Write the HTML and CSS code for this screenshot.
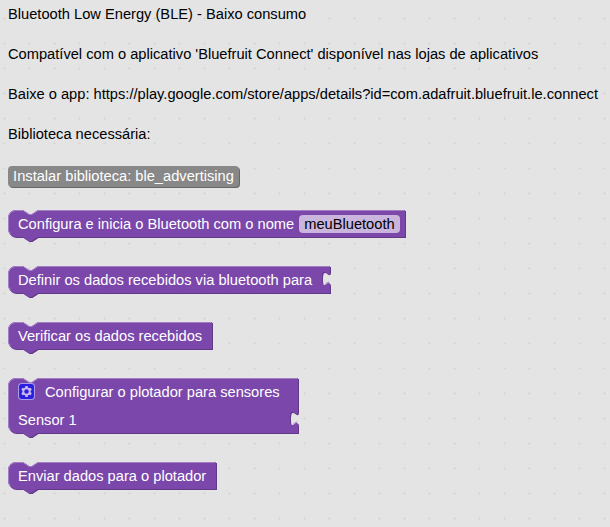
FILE: index.html
```html
<!DOCTYPE html>
<html lang="pt-BR">
<head>
<meta charset="utf-8">
<title>Bluetooth Low Energy</title>
<link rel="stylesheet" href="styles.css">
</head>
<body>
<svg class="grid" aria-hidden="true">
  <defs><pattern id="dots" width="25" height="25" patternUnits="userSpaceOnUse"><path d="M3 18.5h3M4.500 17v3" stroke="#d8d8d8"/></pattern></defs>
  <rect width="100%" height="100%" fill="url(#dots)"/>
</svg>
<main class="flyout">
  <p class="label">Bluetooth Low Energy (BLE) - Baixo consumo</p>
  <p class="label">Compatível com o aplicativo 'Bluefruit Connect' disponível nas lojas de aplicativos</p>
  <p class="label">Baixe o app: https://play.google.com/store/apps/details?id=com.adafruit.bluefruit.le.connect</p>
  <p class="label">Biblioteca necessária:</p>
  <button class="install">Instalar biblioteca: ble_advertising</button>
  <section class="block">
    <svg class="shape" width="400" height="34" aria-hidden="true">
      <path class="dark" transform="translate(1,1)" d="M0 8A8 8 0 0 1 8 0H15l6 4h3l6-4H397V27H29.500l-6 4h-3l-6-4H8a8 8 0 0 1-8-8z"/>
      <path class="body" d="M0 8A8 8 0 0 1 8 0H15l6 4h3l6-4H397V27H29.500l-6 4h-3l-6-4H8a8 8 0 0 1-8-8z"/>
      <path class="light" d="M2.700 24.300A7.500 7.500 0 0 1 .5 19V8A7.500 7.500 0 0 1 8 .5H15l6 4h3l6-4H396.500"/>
    </svg>
    <div class="row"><span>Configura e inicia o Bluetooth com o nome</span><span class="field">meuBluetooth</span></div>
  </section>
  <section class="block">
    <svg class="shape" width="330" height="34" aria-hidden="true">
      <path class="dark" transform="translate(1,1)" d="M0 8A8 8 0 0 1 8 0H15l6 4h3l6-4H322v5c0 10-8-8-8 7.500s8-2.500 8 7.500V27H29.500l-6 4h-3l-6-4H8a8 8 0 0 1-8-8z"/>
      <path class="body" d="M0 8A8 8 0 0 1 8 0H15l6 4h3l6-4H322v5c0 10-8-8-8 7.500s8-2.500 8 7.500V27H29.500l-6 4h-3l-6-4H8a8 8 0 0 1-8-8z"/>
      <path class="light" d="M2.700 24.300A7.500 7.500 0 0 1 .5 19V8A7.500 7.500 0 0 1 8 .5H15l6 4h3l6-4H321.500M317.500 17.800l3.700-2"/>
    </svg>
    <div class="row">Definir os dados recebidos via bluetooth para</div>
  </section>
  <section class="block">
    <svg class="shape" width="215" height="34" aria-hidden="true">
      <path class="dark" transform="translate(1,1)" d="M0 8A8 8 0 0 1 8 0H15l6 4h3l6-4H204V27H29.500l-6 4h-3l-6-4H8a8 8 0 0 1-8-8z"/>
      <path class="body" d="M0 8A8 8 0 0 1 8 0H15l6 4h3l6-4H204V27H29.500l-6 4h-3l-6-4H8a8 8 0 0 1-8-8z"/>
      <path class="light" d="M2.700 24.300A7.500 7.500 0 0 1 .5 19V8A7.500 7.500 0 0 1 8 .5H15l6 4h3l6-4H203.500"/>
    </svg>
    <div class="row">Verificar os dados recebidos</div>
  </section>
  <section class="block">
    <svg class="shape" width="300" height="62" aria-hidden="true">
      <path class="dark" transform="translate(1,1)" d="M0 8A8 8 0 0 1 8 0H15l6 4h3l6-4H290V33c0 10-8-8-8 7.500s8-2.500 8 7.500V55H29.500l-6 4h-3l-6-4H8a8 8 0 0 1-8-8z"/>
      <path class="body" d="M0 8A8 8 0 0 1 8 0H15l6 4h3l6-4H290V33c0 10-8-8-8 7.500s8-2.500 8 7.500V55H29.500l-6 4h-3l-6-4H8a8 8 0 0 1-8-8z"/>
      <path class="light" d="M2.700 52.300A7.500 7.500 0 0 1 .5 47V8A7.500 7.500 0 0 1 8 .5H15l6 4h3l6-4H289.500M285.500 45.800l3.700-2"/>
    </svg>
    <div class="row">
      <svg class="gear" width="17" height="17" viewBox="0 0 16 16" aria-hidden="true">
        <rect class="gear-box" x=".5" y=".5" width="15" height="15" rx="3"/>
        <path class="gear-wheel" d="m4.203 7.296 0 1.368-.92.677-.11.410.900 1.559.410.110 1.043-.457 1.187.683.127 1.134.300.300 1.800 0 .300-.299.127-1.138 1.185-.682 1.046.458.409-.110.900-1.559-.110-.410-.920-.677 0-1.366.920-.677.110-.410-.900-1.559-.409-.109-1.046.458-1.185-.682-.127-1.138-.300-.299-1.800 0-.300.300-.126 1.135-1.187.682-1.043-.457-.410.110-.899 1.559.108.409z"/>
        <circle class="gear-hole" cx="8" cy="8" r="2.100"/>
      </svg>
      <span>Configurar o plotador para sensores</span>
    </div>
    <div class="row">Sensor 1</div>
  </section>
  <section class="block">
    <svg class="shape" width="215" height="34" aria-hidden="true">
      <path class="dark" transform="translate(1,1)" d="M0 8A8 8 0 0 1 8 0H15l6 4h3l6-4H208V27H29.500l-6 4h-3l-6-4H8a8 8 0 0 1-8-8z"/>
      <path class="body" d="M0 8A8 8 0 0 1 8 0H15l6 4h3l6-4H208V27H29.500l-6 4h-3l-6-4H8a8 8 0 0 1-8-8z"/>
      <path class="light" d="M2.700 24.300A7.500 7.500 0 0 1 .5 19V8A7.500 7.500 0 0 1 8 .5H15l6 4h3l6-4H207.500"/>
    </svg>
    <div class="row">Enviar dados para o plotador</div>
  </section>
</main>
</body>
</html>
```
FILE: styles.css
```css
body {
  margin: 0;
  height: 527px;
  overflow: hidden;
  background: #e4e4e4;
  font: 14.667px/16px "Liberation Sans", Arial, sans-serif;
  color: #000;
}
.grid {
  position: absolute;
  inset: 0;
  width: 100%;
  height: 100%;
  z-index: -1;
}
.flyout {
  display: flex;
  flex-direction: column;
  align-items: flex-start;
  padding: 6px 8px 0;
  white-space: nowrap;
}
.label {
  margin: 0 0 24px;
}
.install {
  font: inherit;
  color: #fff;
  height: 21px;
  width: 231px;
  margin: 0 0 23px;
  padding: 0 0 1px;
  border: 0;
  border-radius: 4px;
  background: #888;
  box-shadow: 1px 1px 0 #666;
}
.block {
  position: relative;
  margin-bottom: 28px;
  padding-left: 10px;
  color: #fff;
}
.shape {
  position: absolute;
  left: 0;
  top: 0;
  z-index: -1;
  overflow: visible;
}
.dark { fill: #623989; }
.body { fill: #7b47ab; }
.light {
  fill: none;
  stroke: #a37ec4;
}
.row {
  display: flex;
  align-items: center;
  height: 28px;
}
.field {
  margin-left: 5px;
  height: 18px;
  line-height: 18px;
  padding: 0 5px;
  border-radius: 4px;
  background: #cab5dd;
  color: #000;
}
.gear {
  margin: -2px 10px 0 0;
}
.gear-box {
  fill: #2a1fe0;
  stroke: #a99be8;
}
.gear-wheel { fill: #cbb9ee; }
.gear-hole { fill: #2a1fe0; }
```
